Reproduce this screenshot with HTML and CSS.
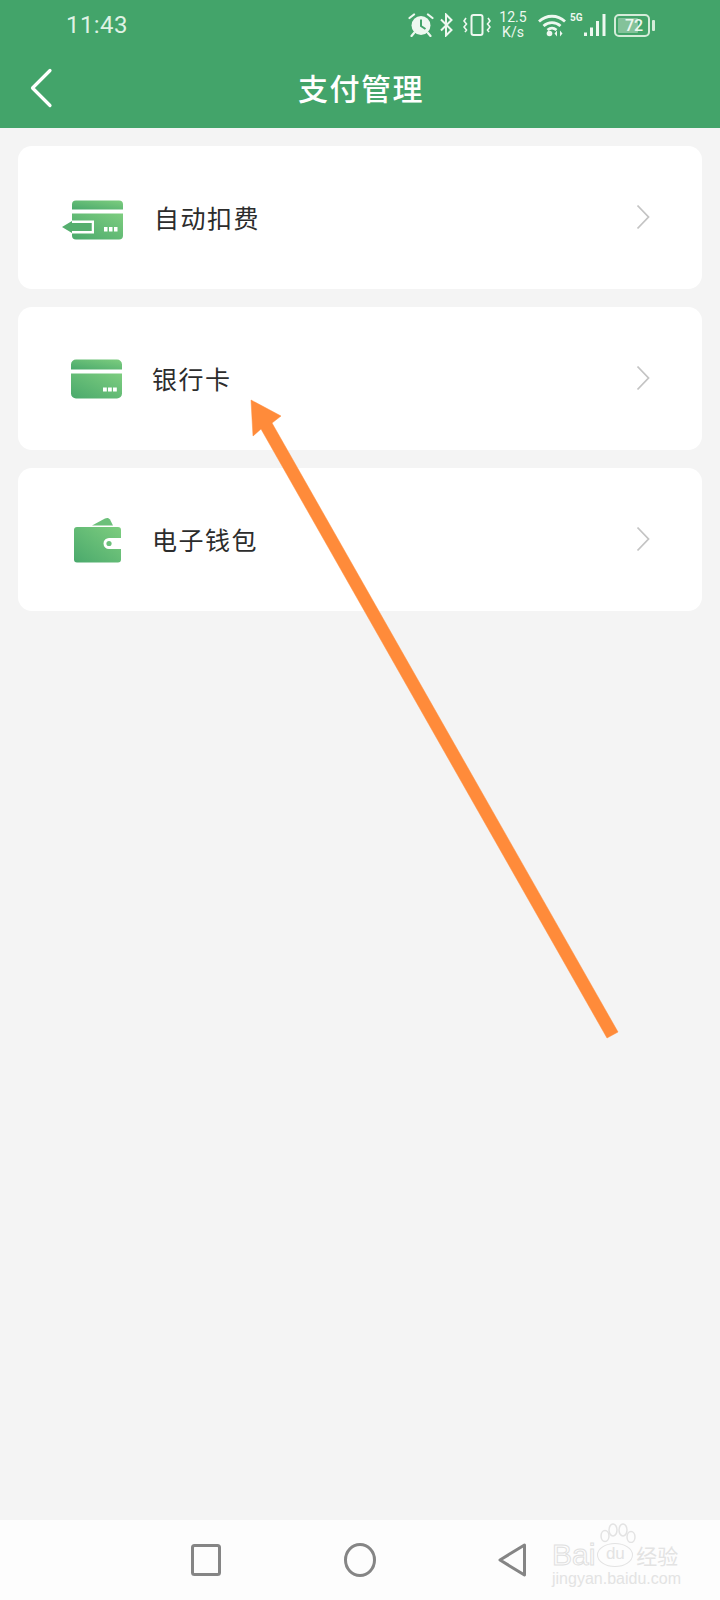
FILE: index.html
```html
<!DOCTYPE html>
<html lang="zh-CN">
<head>
    <meta charset="UTF-8">
    <meta name="viewport" content="width=device-width, initial-scale=1.0">
    <title>支付管理</title>
    <link rel="stylesheet" href="styles.css">
</head>
<body>
    <!-- 顶部绿色区域 -->
    <header class="header">
        <div class="status-bar">
            <span class="time">11:43</span>
            <div class="status-icons">
                <svg class="ic-alarm" width="26" height="24" viewBox="0 0 26 24">
                    <circle cx="13" cy="12.5" r="9.5" fill="#eef8f0"/>
                    <path d="M13 6.5V13l4.5 3" fill="none" stroke="#43a46a" stroke-width="2"/>
                    <path d="M1.5 5 6 1.5M24.5 5 20 1.5M6 20l-2.500 3M20 20l2.500 3" stroke="#eef8f0" stroke-width="2.200" stroke-linecap="round"/>
                </svg>
                <svg class="ic-bt" width="13" height="24" viewBox="0 0 13 24">
                    <path d="M1 6.500 11.500 17 6 22.500V1.500L11.500 7 1 17.500" fill="none" stroke="#eef8f0" stroke-width="2"/>
                </svg>
                <svg class="ic-vibrate" width="28" height="24" viewBox="0 0 28 24">
                    <rect x="8.500" y="2" width="11" height="20" rx="2" fill="none" stroke="#eef8f0" stroke-width="2"/>
                    <path d="M3 5 1 8l2.500 3L1 14l2.500 3L2 19M25 5l2 3-2.500 3 2.500 3-2.500 3 1.500 2" fill="none" stroke="#eef8f0" stroke-width="1.600"/>
                </svg>
                <div class="speed"><span>12.5</span><span>K/s</span></div>
                <svg class="ic-wifi" width="28" height="24" viewBox="0 0 28 24">
                    <path d="M1 8.500C8.500 1.500 19.500 1.500 27 8.500M5.500 13c5-4.500 12-4.500 17 0M9.500 17c3-2.500 6-2.500 9 0" fill="none" stroke="#eef8f0" stroke-width="2.800"/>
                    <circle cx="11.500" cy="20.500" r="2.800" fill="#eef8f0"/>
                    <path d="M19 17.500v6l-2.500-3zM22 17.500v6l2.500-3z" fill="#eef8f0"/>
                </svg>
                <div class="signal-wrap">
                    <span class="net">5G</span>
                    <svg width="24" height="24" viewBox="0 0 24 24">
                        <path d="M2 19.500h3V23H2zM8 14.500h3V23H8zM14 8h3v15h-3zM20.500 1h3v22h-3z" fill="#eef8f0"/>
                    </svg>
                </div>
                <div class="battery">
                    <div class="battery-body">
                        <div class="battery-fill"><span>72</span></div>
                    </div>
                    <div class="battery-nub"></div>
                </div>
            </div>
        </div>
        <div class="title-bar">
            <svg class="back" width="24" height="40" viewBox="0 0 24 40">
                <path d="M21 2.500 3.500 20 21 37.500" fill="none" stroke="#fff" stroke-width="3.200" stroke-linecap="round" stroke-linejoin="round"/>
            </svg>
            <h1 class="title">支付管理</h1>
        </div>
    </header>

    <!-- 列表 -->
    <main class="list">
        <div class="card">
            <svg class="card-icon" width="64" height="64" viewBox="0 0 64 64">
                <defs>
                    <linearGradient id="g1" x1="0" y1="1" x2="1" y2="0">
                        <stop offset="0" stop-color="#4aa96c"/>
                        <stop offset="1" stop-color="#7dcd7f"/>
                    </linearGradient>
                </defs>
                <path d="M12 18.500a4 4 0 0 1 4-4h43a4 4 0 0 1 4 4v5H12z" fill="url(#g1)"/>
                <path d="M12 27.500h51v22a4 4 0 0 1-4 4H16a4 4 0 0 1-4-4z" fill="url(#g1)"/>
                <path d="M12 34.500h22v13H12V45h19.500v-8H12z" fill="#fff"/>
                <path d="M2 41 12 35v2h19.500v8H12v2z" fill="#55ae6e"/>
                <path d="M44 41h3.500v4.500H44zM49 41h3.500v4.500H49zM54 41h3.500v4.500H54z" fill="#fff"/>
            </svg>
            <span class="card-label label-auto">自动扣费</span>
            <svg class="chevron" width="14" height="26" viewBox="0 0 14 26">
                <path d="M1.500 1.500 12.500 13 1.500 24.500" fill="none" stroke="#c4c4c4" stroke-width="1.800"/>
            </svg>
        </div>
        <div class="card">
            <svg class="card-icon" width="64" height="64" viewBox="0 0 64 64">
                <path d="M11 17.500a5 5 0 0 1 5-5h41a5 5 0 0 1 5 5v5H11z" fill="url(#g1)"/>
                <path d="M11 26.500h51v20a5 5 0 0 1-5 5H16a5 5 0 0 1-5-5z" fill="url(#g1)"/>
                <path d="M43 40.500h3.800v4H43zM48 40.500h3.800v4H48zM53 40.500h3.800v4H53z" fill="#fff"/>
            </svg>
            <span class="card-label label-bank">银行卡</span>
            <svg class="chevron" width="14" height="26" viewBox="0 0 14 26">
                <path d="M1.500 1.500 12.500 13 1.500 24.500" fill="none" stroke="#c4c4c4" stroke-width="1.800"/>
            </svg>
        </div>
        <div class="card">
            <svg class="card-icon" width="64" height="64" viewBox="0 0 64 64">
                <path d="M32 17.500 45 10.500c2-1 4-.5 5 1l3 6z" fill="#6cc07a"/>
                <path d="M14 22a3 3 0 0 1 3-3h41a3 3 0 0 1 3 3v8H49a5.500 5.500 0 0 0 0 11h12v10.500a3 3 0 0 1-3 3H17a3 3 0 0 1-3-3z" fill="url(#g1)"/>
                <circle cx="49" cy="35.500" r="2.600" fill="#6cc07a"/>
            </svg>
            <span class="card-label label-wallet">电子钱包</span>
            <svg class="chevron" width="14" height="26" viewBox="0 0 14 26">
                <path d="M1.500 1.500 12.500 13 1.500 24.500" fill="none" stroke="#c4c4c4" stroke-width="1.800"/>
            </svg>
        </div>
    </main>

    <!-- 底部导航 -->
    <nav class="nav-bar">
        <svg width="32" height="34" viewBox="0 0 32 34">
            <rect x="2.500" y="2.500" width="27" height="29" rx="2" fill="none" stroke="#858585" stroke-width="3"/>
        </svg>
        <svg width="32" height="34" viewBox="0 0 32 34">
            <ellipse cx="16" cy="17" rx="14.500" ry="15.500" fill="none" stroke="#858585" stroke-width="3"/>
        </svg>
        <svg width="30" height="34" viewBox="0 0 30 34">
            <path d="M26.500 2 2 17l24.500 15z" fill="none" stroke="#858585" stroke-width="3" stroke-linejoin="round"/>
        </svg>
        <div class="watermark">
            <svg class="paw" width="40" height="20" viewBox="0 0 40 20">
                <g fill="none" stroke="#e3e3e3" stroke-width="1.500">
                    <ellipse cx="7" cy="13" rx="4" ry="5.500"/>
                    <ellipse cx="15" cy="7" rx="4" ry="6"/>
                    <ellipse cx="25" cy="7" rx="4" ry="6"/>
                    <ellipse cx="33" cy="14" rx="4" ry="5.500"/>
                </g>
            </svg>
            <div class="wm-top"><span class="wm-bai">Bai</span><span class="wm-du">du</span><span class="wm-cn">经验</span></div>
            <div class="wm-url">jingyan.baidu.com</div>
        </div>
    </nav>

    <!-- 橙色箭头 -->
    <svg class="arrow" width="720" height="1600" viewBox="0 0 720 1600">
        <path d="M251 400 281 416 272 423 618 1032 607 1038 261 429 253 436z" fill="#ff8b3a" stroke="#ff8b3a" stroke-width="1" stroke-opacity="0.5"/>
    </svg>
</body>
</html>
```

FILE: styles.css
```css
/* 全局样式 */
body {
    margin: 0;
    width: 720px;
    height: 1600px;
    position: relative;
    overflow: hidden;
    display: flex;
    flex-direction: column;
    background-color: #f4f4f4;
    font-family: "Noto Sans CJK SC", sans-serif;
    color: #333;
}

/* 顶部 */
.header {
    height: 128px;
    background-color: #43a46a;
    color: #eef8f0;
}

.status-bar {
    height: 50px;
    display: flex;
    align-items: center;
    padding: 0 65px 0 66px;
}

.time {
    font-family: Roboto, sans-serif;
    font-size: 24px;
    letter-spacing: 0.4px;
    color: #dff2e4;
}

.status-icons {
    margin-left: auto;
    display: flex;
    align-items: center;
    gap: 7px;
}

.ic-bt {
    margin-left: -1px;
}

.ic-vibrate {
    margin-left: 3px;
}

.speed {
    display: flex;
    flex-direction: column;
    align-items: center;
    width: 28px;
    margin: 0 4px 0 1px;
    font-family: Roboto, sans-serif;
    font-size: 14px;
    line-height: 15px;
}

.signal-wrap {
    position: relative;
    width: 36px;
    margin-left: -3px;
    display: flex;
    justify-content: flex-end;
}

.net {
    position: absolute;
    left: 0;
    top: 0;
    font-family: Roboto, sans-serif;
    font-size: 10px;
    line-height: 10px;
    font-weight: 700;
}

.battery {
    display: flex;
    align-items: center;
    gap: 2px;
    margin-left: 1px;
}

.battery-body {
    width: 36px;
    height: 23px;
    box-sizing: border-box;
    border: 2px solid #d5ecd9;
    border-radius: 5px;
    padding: 2px;
}

.battery-fill {
    width: 72%;
    height: 100%;
    background-color: #84c29a;
    border-radius: 1px;
    font-family: Roboto, sans-serif;
    font-size: 16px;
    font-weight: 500;
    line-height: 15px;
    white-space: nowrap;
    text-indent: 7px;
}

.battery-nub {
    width: 3px;
    height: 11px;
    background-color: #d5ecd9;
    border-radius: 1px;
}

.title-bar {
    height: 78px;
    position: relative;
    display: flex;
    align-items: center;
    justify-content: center;
}

.back {
    position: absolute;
    left: 29px;
    top: 18px;
}

.title {
    margin: 0 0 4px 2px;
    font-size: 30px;
    font-weight: 500;
    letter-spacing: 1.5px;
    color: #fff;
}

/* 列表 */
.list {
    flex: 1;
    display: flex;
    flex-direction: column;
    gap: 18px;
    padding: 18px 18px 0;
}

.card {
    height: 143px;
    display: flex;
    align-items: center;
    padding: 0 52px 0 42px;
    background-color: #fff;
    border-radius: 14px;
}

.card-label {
    margin-bottom: 1px;
    font-size: 25px;
    letter-spacing: 1.5px;
    color: #2c2c2c;
}

.label-auto {
    margin-left: 30px;
}

.label-bank {
    margin-left: 28px;
}

.label-wallet {
    margin-left: 28px;
}

.chevron {
    margin: 0 0 2px auto;
}

/* 底部导航 */
.nav-bar {
    height: 80px;
    position: relative;
    display: flex;
    align-items: center;
    gap: 122px;
    padding-left: 190px;
    background-color: #fdfdfd;
}

.watermark {
    position: absolute;
    left: 552px;
    top: 3px;
    width: 130px;
    color: #e3e3e3;
}

.paw {
    display: block;
    margin-left: 46px;
}

.wm-top {
    margin-top: -1px;
    display: flex;
    align-items: center;
    height: 26px;
    font-family: "Liberation Sans", sans-serif;
    font-size: 30px;
    line-height: 26px;
}

.wm-bai {
    color: #fdfdfd;
    -webkit-text-stroke: 1px #e0e0e0;
}

.wm-du {
    width: 36px;
    height: 24px;
    margin-left: 2px;
    box-sizing: border-box;
    border: 1.5px solid #e3e3e3;
    border-radius: 50%;
    font-size: 17px;
    line-height: 20px;
    text-align: center;
}

.wm-cn {
    margin-left: 3px;
    font-family: "Noto Sans CJK SC", sans-serif;
    font-size: 21px;
    white-space: nowrap;
}

.wm-url {
    margin-top: 3px;
    font-family: "Liberation Sans", sans-serif;
    font-size: 16px;
    line-height: 16px;
    white-space: nowrap;
}

/* 箭头覆盖层 */
.arrow {
    position: absolute;
    left: 0;
    top: 0;
    pointer-events: none;
}
```
